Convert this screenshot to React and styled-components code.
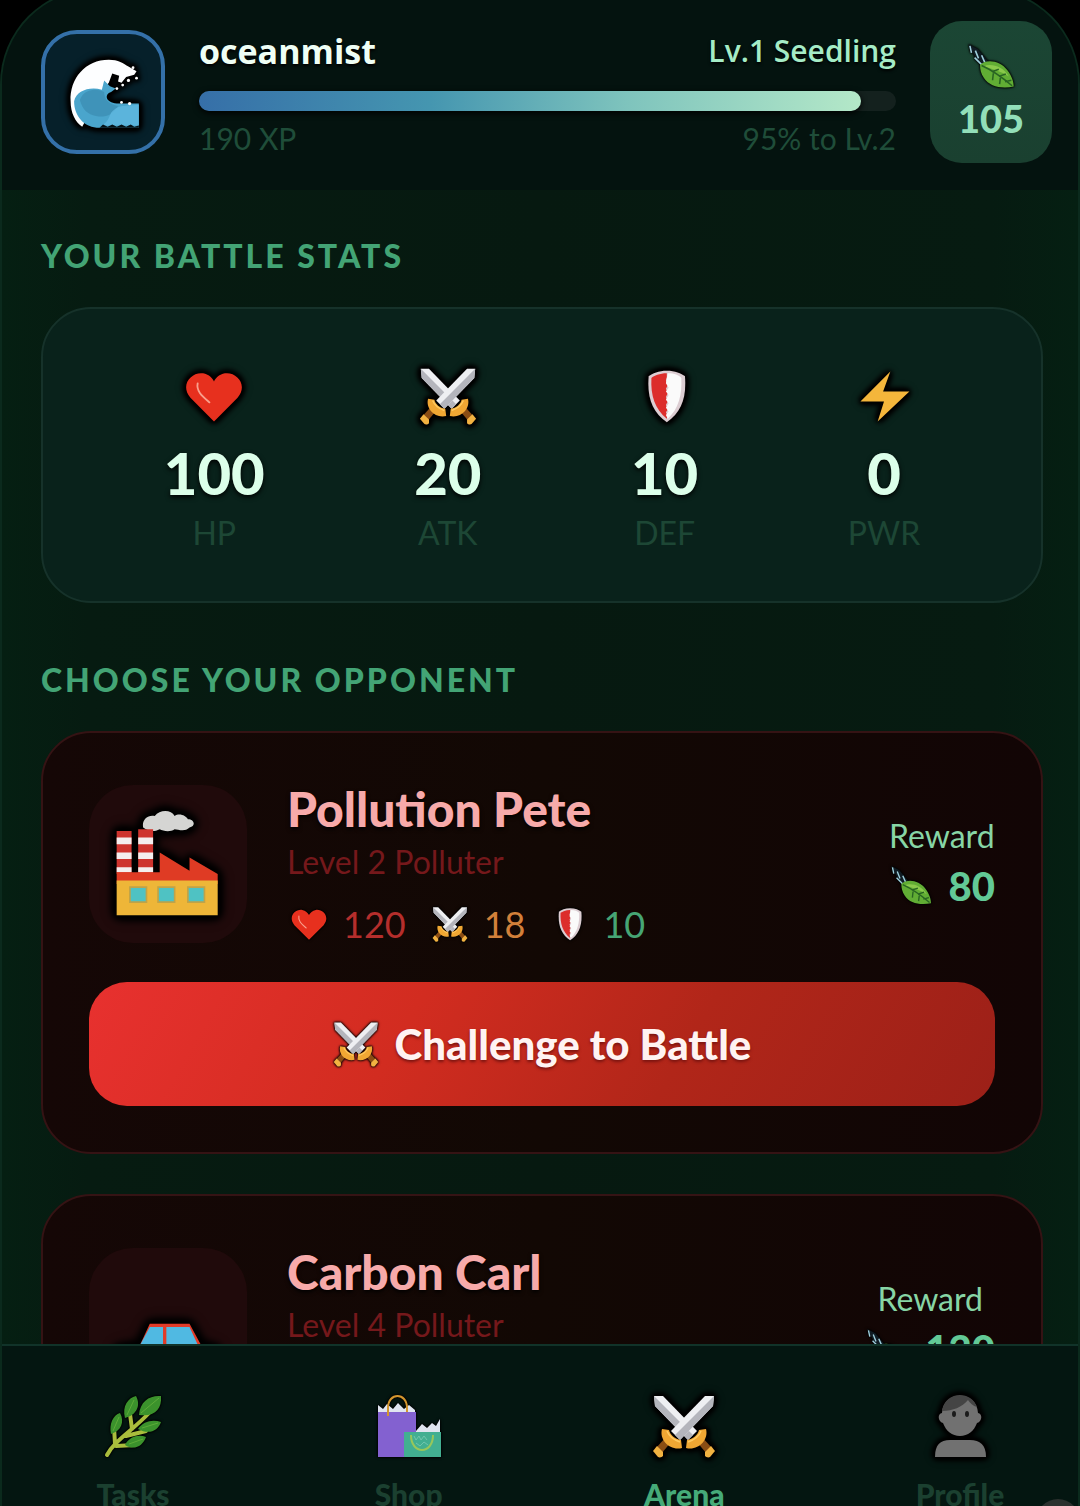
import { useId } from 'react';
import styled, { createGlobalStyle } from 'styled-components';

const GlobalStyle = createGlobalStyle`
	* {
		box-sizing: border-box;
	}

	body {
		margin: 0;
		overflow: hidden;
		background: #000;
		font-family: Lato, 'Open Sans', sans-serif;
	}

	button {
		font-family: inherit;
	}
`;

/* the frame runs a little past the top of the window */
const Shell = styled.div`
	display: flex;
	flex-direction: column;
	height: calc(100vh + 12px);
	margin-top: -12px;
	overflow: hidden;
	border: 2px solid #0b2a1d;
	border-bottom: 0;
	border-radius: 96px 96px 0 0;
	background: linear-gradient(90deg, #051f12 0%, #061b11 8%, #061910 50%, #061b11 92%, #051f12 100%);
`;

const Header = styled.header`
	display: flex;
	align-items: center;
	gap: 34px;
	flex: none;
	padding: 31px 26px 27px 39px;
	background: #04130f;
`;

const Avatar = styled.div`
	display: flex;
	align-items: center;
	justify-content: center;
	flex: none;
	width: 124px;
	height: 124px;
	border: 4px solid #3470a8;
	border-radius: 36px;
	background: #06202a;
`;

const Progress = styled.div`
	display: flex;
	flex-direction: column;
	flex: 1;
	min-width: 0;
`;

const ProgressRow = styled.div`
	display: flex;
	justify-content: space-between;
	align-items: center;
	line-height: 44px;
	font-family: 'Open Sans', sans-serif;
	text-shadow: 0 2px 3px #000;
`;

const UserName = styled.strong`
	font-size: 34px;
	font-weight: 700;
	color: #effff5;
`;

const LevelName = styled.span`
	font-size: 30px;
	font-weight: 600;
	color: #a5ecc6;
`;

const ProgressMeta = styled.div`
	display: flex;
	justify-content: space-between;
	font-size: 30px;
	line-height: 34px;
	color: #1f4d39;
`;

const Track = styled.div`
	height: 20px;
	margin: 18px 0 10px;
	border-radius: 10px;
	background: #14211e;
`;

const Fill = styled.div`
	height: 100%;
	border-radius: 10px;
	background: linear-gradient(90deg, #366fa8 0%, #4596b0 35%, #7fc4bd 65%, #b4e8c8 100%);
	box-shadow: 0 2px 6px #000;
`;

const LeafBadge = styled.div`
	display: flex;
	flex-direction: column;
	align-items: center;
	justify-content: center;
	gap: 6px;
	flex: none;
	width: 122px;
	height: 142px;
	padding-bottom: 4px;
	border-radius: 32px;
	background: linear-gradient(180deg, #1b4634, #1a4030);
	font-size: 38px;
	line-height: 40px;
	font-weight: 900;
	color: #92dfb9;
`;

const Content = styled.main`
	display: flex;
	flex-direction: column;
	flex: 1;
	min-height: 0;
	overflow: hidden;
	padding: 46px 35px 0 39px;
`;

const SectionTitle = styled.h2`
	margin: 0 0 31px;
	font-size: 32px;
	line-height: 40px;
	font-weight: 900;
	letter-spacing: 3px;
	text-transform: uppercase;
	color: #43a475;
`;

const StatsCard = styled.section`
	display: flex;
	justify-content: space-around;
	flex: none;
	margin-bottom: 57px;
	padding: 58px 46px 46px;
	border: 2px solid #16322a;
	border-radius: 50px;
	background: #09221b;
`;

const Stat = styled.div`
	display: flex;
	flex-direction: column;
	align-items: center;
`;

const StatValue = styled.span`
	margin-top: 14px;
	font-size: 58px;
	line-height: 68px;
	font-weight: 900;
	color: #dcffea;
	text-shadow: 0 2px 5px #000;
`;

const StatLabel = styled.span`
	margin-top: 4px;
	font-size: 32px;
	line-height: 44px;
	color: #1d4735;
`;

const OpponentCard = styled.article`
	flex: none;
	margin-bottom: 40px;
	padding: 46px;
	border: 2px solid #351314;
	border-radius: 50px;
	background: linear-gradient(90deg, #150706, #120804 50%, #120505);
`;

const OpponentTop = styled.div`
	display: flex;
	align-items: center;
	gap: 40px;
	min-height: 170px;
`;

const Portrait = styled.div`
	display: flex;
	align-items: center;
	justify-content: center;
	flex: none;
	width: 158px;
	height: 158px;
	border-radius: 44px;
	background: #200a0b;
`;

const OpponentInfo = styled.div`
	flex: 1;
	align-self: flex-start;
	min-width: 0;
`;

const OpponentName = styled.h3`
	margin: 0;
	font-size: 48px;
	line-height: 60px;
	font-weight: 900;
	color: #f7aaaa;
	text-shadow: 0 2px 4px #000;
`;

const OpponentLevel = styled.p`
	margin: 0;
	font-size: 32px;
	line-height: 46px;
	color: #75181b;
`;

const StatLine = styled.div`
	display: flex;
	gap: 26px;
	margin-top: 14px;
	padding-left: 4px;
`;

const SmallStat = styled.span`
	display: flex;
	align-items: center;
	gap: 16px;
	font-size: 36px;
	line-height: 50px;
	color: ${({ $color }) => $color};
`;

const Reward = styled.div`
	display: flex;
	flex-direction: column;
	align-items: center;
	font-size: 32px;
	line-height: 44px;
	color: #87d5a5;
`;

const RewardAmount = styled.span`
	display: flex;
	align-items: center;
	gap: 16px;
	font-size: 40px;
	line-height: 56px;
	font-weight: 900;
	color: #62c996;
`;

const BattleButton = styled.button`
	display: flex;
	align-items: center;
	justify-content: center;
	gap: 16px;
	width: 100%;
	height: 124px;
	margin-top: 33px;
	padding: 0;
	border: 0;
	border-radius: 38px;
	background: linear-gradient(120deg, #e8312f 0%, #d22c20 35%, #b12619 65%, #9c2018 100%);
	font-size: 42px;
	font-weight: 900;
	color: #fff3f2;
	text-shadow: 0 2px 3px #7a1410;
`;

const TabBar = styled.nav`
	display: flex;
	justify-content: space-between;
	flex: none;
	height: 162px;
	overflow: hidden;
	padding: 0 70px 0 83px;
	border-top: 2px solid #113329;
	background: #041611;
`;

const Tab = styled.a`
	display: flex;
	flex-direction: column;
	align-items: center;
	flex: none;
	gap: 16px;
	width: 96px;
	padding-top: 48px;
	font-size: 30px;
	line-height: 40px;
	font-weight: 900;
	text-decoration: none;
	color: ${({ $active }) => ($active ? '#46ab79' : '#1b4030')};
`;

const HelpDot = styled.span`
	position: fixed;
	right: 0;
	bottom: -37px;
	width: 44px;
	height: 44px;
	border-radius: 50%;
	background: #2b302e;
`;

const Emoji = styled.svg`
	display: block;
	flex: none;
	width: ${({ $size }) => $size}px;
	height: ${({ $size }) => $size}px;
	overflow: visible;
	filter: ${({ $glow }) => `drop-shadow(0 0 ${$glow}px #000) `.repeat($glow > 1 ? 4 : 2)};
`;

function Icon({ size, glow = 2, children }) {
	return (
		<Emoji viewBox="0 0 64 64" $size={size} $glow={glow} aria-hidden="true">
			{children}
		</Emoji>
	);
}

function Wave({ size }) {
	return (
		<Icon size={size}>
			<g transform="translate(1 2)">
				<path d="M3 38C2 18 16 2 36 2c8 0 13 3 17 6l7 4-2 3-7 2-4 5-3-1 1-5-6-2-3 8-5 6-4 6-14 26C7 56 3 48 3 38z" fill="#fdfeff" />
				<path d="M6 38c2-9 13-13 24-10l2-8 5 5 5 2-4 3c-6 2-5 9 5 10h19v21H28C15 61 6 51 6 38z" fill="#4aa5cc" />
				<path d="M11 37c3-9 13-11 21-7 0 7 5 11 12 12-4 7-10 10-18 9-8-1-13-6-15-14z" fill="#3a8cb0" opacity="0.7" />
				<path d="M38 48c3-4 7-6 11-6l13-1v18H30c4-2 6-6 8-11z" fill="#5fb8e0" opacity="0.8" />
				<path d="M28 61l3-3 4 2 4-2 4 2 4-2 4 2 4-2 3 2 4-1v2z" fill="#061216" />
				<g fill="#fff">
					<circle cx="57" cy="9" r="1.2" />
					<circle cx="53" cy="20" r="1.4" />
					<circle cx="48" cy="24" r="1.2" />
					<circle cx="60" cy="18" r="1.2" />
					<circle cx="43" cy="27" r="1.2" />
					<circle cx="47" cy="39" r="1.2" />
					<circle cx="54" cy="40" r="1.4" />
				</g>
			</g>
		</Icon>
	);
}

function Leaf({ size }) {
	return (
		<Icon size={size} glow={1}>
			<path d="M3 3l12 6 14 17-5 6-11-11z" fill="#101c24" />
			<path d="M5 5l2 9M12 11l4 10M20 17l4 9M11 20l9 9" stroke="#9fd0de" strokeWidth="2" fill="none" />
			<path d="M18 29c9-8 26-5 35 7 6 8 8 15 8 21-16 3-31 0-38-11-4-6-5-11-5-17z" fill="#61ad34" />
			<path d="M23 31c9-4 24 0 32 13-9-6-20-9-32-13z" fill="#8ac94b" />
			<path d="M20 30c11 5 25 14 39 26M33 38l9-3M42 44l9-3M35 40l-1 9M44 46l-1 8M50 51l8-2" stroke="#286422" strokeWidth="2" fill="none" />
		</Icon>
	);
}

function Heart({ size, glow }) {
	return (
		<Icon size={size} glow={glow}>
			<path d="M32 60L6 34C-6 20 7 5 20 7c6 1 10 5 12 9 2-4 6-8 12-9 13-2 26 13 14 27z" fill="#e7301e" />
			<path d="M14 18c-2 9 6 15 13 21" fill="none" stroke="#f9a08d" strokeWidth="2" strokeLinecap="round" />
		</Icon>
	);
}

function Swords({ size, glow }) {
	const id = useId();
	return (
		<Icon size={size} glow={glow}>
			<defs>
				<g id={id}>
					<path d="M44 47l5-5 11 12-5 6z" fill="#8a4d14" />
					<path d="M53 58l6-6 4 5-5 6c-2 1-4 0-5-1z" fill="#f2b241" />
					<path d="M2 2h9l34 35-9 9L3 12z" fill="#eeeff2" />
					<path d="M2 2l39 39-5 5L3 12z" fill="#b4b5bc" />
					<path d="M34 54l1-8c6-1 11-5 12-10l7-1c3 11-8 22-20 19z" fill="#f0a733" />
					<path d="M36 48c6-2 11-6 13-11" fill="none" stroke="#ffcb62" strokeWidth="1.5" />
				</g>
			</defs>
			<use href={`#${id}`} />
			<use href={`#${id}`} transform="matrix(-1 0 0 1 64 0)" />
		</Icon>
	);
}

function Shield({ size, glow }) {
	return (
		<Icon size={size} glow={glow}>
			<path d="M34 4c9 0 16 3 20 6 2 24-4 40-20 51C18 50 12 34 14 10c4-3 11-6 20-6z" fill="#dccdd2" />
			<path d="M34 7c-8 0-14 3-17 5-1 20 4 34 17 45l1-3-2-4 2-3-2-5 2-4-2-5 2-4-2-5 2-4-2-5 1-4z" fill="#dc2d2b" />
			<path d="M35 7c8 0 12 2 15 5 1 19-3 34-15 45l-2-4 3-4-3-4 3-5-3-4 3-5-3-4 3-4-3-5z" fill="#fafafa" />
		</Icon>
	);
}

function Bolt({ size }) {
	return (
		<Icon size={size}>
			<path d="M39 5L6 38h26l-7 22 35-33H31z" fill="#f4b63b" />
		</Icon>
	);
}

function Factory({ size }) {
	return (
		<Icon size={size} glow={3}>
			<g transform="translate(-2 -4)">
				<path d="M19 14c-1-5 3-8 7-7 3-4 10-4 12 0 3-2 7 0 8 2 4 0 5 4 1 5-3 3-7 1-9 1-3 2-7 1-9 0-4 2-7 1-10-1z" fill="#d5d5d3" />
				<path d="M3 16h9v26H3zM16 15h9v28h-9z" fill="#ce342e" />
				<path d="M3 20h9v4H3zM16 20h9v4h-9zM3 29h9v4H3zM16 29h9v4h-9zM3 38h9v3H3zM16 38h9v3h-9z" fill="#f4eeee" />
				<path d="M3 41h26V29l18 11v-8l17 10v6H3z" fill="#df3b24" />
				<path d="M3 46h61v21H3z" fill="#eeb638" />
				<path d="M11 50h10v9H11zM28 50h10v9H28zM46 50h10v9H46z" fill="#4fc2c3" stroke="#bfa348" />
			</g>
		</Icon>
	);
}

function Car({ size }) {
	return (
		<Icon size={size} glow={3}>
			<g transform="translate(4 0)">
				<path d="M-3 45l14-2 6-13h24l7 13 10 2v12H-3z" fill="#e23b28" />
				<path d="M17 32h8v13H10zM27 32h14l6 13H27z" fill="#50b9e2" />
				<circle cx="11" cy="57" r="6" fill="#333" />
				<circle cx="45" cy="57" r="6" fill="#333" />
			</g>
		</Icon>
	);
}

function Herb({ size }) {
	return (
		<Icon size={size} glow={1}>
			<g transform="translate(2 0)">
				<path d="M4 61C11 47 29 37 46 19M12 50l-1-17M29 35l-2-15M23 42l20-5M13 52l19-1" fill="none" stroke="#a9bd3c" strokeWidth="4" strokeLinecap="round" />
				<path d="M36 21C37 7 47 1 58 2c1 13-6 21-22 19zM22 24C19 12 25 4 33 2c5 9 1 19-11 22zM8 40c-2-10 2-19 9-21 5 9 1 18-9 21zM35 35c5-8 15-10 23-7-3 9-12 13-23 7zM22 51c4-8 13-11 21-8-3 9-12 14-21 8z" fill="#3b922c" />
				<path d="M38 19L56 4M24 21l7-15M10 37l6-14M39 34l16-5M26 50l14-5" stroke="#5dab38" fill="none" />
			</g>
		</Icon>
	);
}

function Bags({ size }) {
	return (
		<Icon size={size} glow={1}>
			<path d="M1 11l5 4 4-5 6 5 5-6 6 6 5-4 6 5v9H1zM39 37l6-7 5 4 5-5 4 3 4-7v18H39z" fill="#e0e5f0" />
			<path d="M1 18h38v45H1z" fill="#8361d0" />
			<path d="M27 38h37v25H27z" fill="#42af91" />
			<path d="M11 22V14c0-16 19-16 19 0v4" fill="none" stroke="#d4962e" strokeWidth="2" />
			<path d="M34 41c0 20 22 20 22 0" fill="none" stroke="#98c75a" strokeWidth="2" />
			<path d="M37 42l2 4 3-4 2 4 3-4 3 4M39 49l4 3 4-4 4 3" fill="none" stroke="#70c6ad" strokeWidth="1" />
		</Icon>
	);
}

function Person({ size }) {
	return (
		<Icon size={size} glow={2}>
			<path d="M14 19C15-4 49-4 50 19c5 1 4 9-1 10-3 8-9 13-17 13s-14-5-17-13c-5-1-6-9-1-10z" fill="#717171" />
			<path d="M14 17C17-3 43-4 49 13c-4-1-7-4-9-7-6 7-15 11-26 11z" fill="#444" />
			<ellipse cx="26" cy="20" rx="2" ry="3" fill="#1b1b1b" />
			<ellipse cx="39" cy="20" rx="2" ry="3" fill="#1b1b1b" />
			<path d="M7 63c0-12 5-17 15-17h20c10 0 16 5 16 17z" fill="#717171" />
		</Icon>
	);
}

const stats = [
	{ label: 'HP', value: 100, icon: Heart },
	{ label: 'ATK', value: 20, icon: Swords },
	{ label: 'DEF', value: 10, icon: Shield },
	{ label: 'PWR', value: 0, icon: Bolt },
];

const opponents = [
	{
		name: 'Pollution Pete',
		level: 2,
		reward: 80,
		icon: Factory,
		fight: { hp: 120, atk: 18, def: 10 },
	},
	{ name: 'Carbon Carl', level: 4, reward: 120, icon: Car },
];

const tabs = [
	{ label: 'Tasks', icon: Herb },
	{ label: 'Shop', icon: Bags },
	{ label: 'Arena', icon: Swords, active: true },
	{ label: 'Profile', icon: Person },
];

function Opponent({ name, level, reward, icon: Picture, fight }) {
	return (
		<OpponentCard>
			<OpponentTop>
				<Portrait>
					<Picture size={106} />
				</Portrait>
				<OpponentInfo>
					<OpponentName>{name}</OpponentName>
					<OpponentLevel>Level {level} Polluter</OpponentLevel>
					{fight && (
						<StatLine>
							<SmallStat $color="#b52e2c">
								<Heart size={36} glow={1} />
								{fight.hp}
							</SmallStat>
							<SmallStat $color="#d2803a">
								<Swords size={36} glow={1} />
								{fight.atk}
							</SmallStat>
							<SmallStat $color="#46a575">
								<Shield size={36} glow={1} />
								{fight.def}
							</SmallStat>
						</StatLine>
					)}
				</OpponentInfo>
				<Reward>
					Reward
					<RewardAmount>
						<Leaf size={44} />
						{reward}
					</RewardAmount>
				</Reward>
			</OpponentTop>
			{fight && (
				<BattleButton type="button">
					<Swords size={46} glow={1} />
					Challenge to Battle
				</BattleButton>
			)}
		</OpponentCard>
	);
}

function App() {
	const progress = 95;

	return (
		<>
			<GlobalStyle />
			<Shell>
				<Header>
					<Avatar>
						<Wave size={74} />
					</Avatar>
					<Progress>
						<ProgressRow>
							<UserName>oceanmist</UserName>
							<LevelName>Lv.1 Seedling</LevelName>
						</ProgressRow>
						<Track>
							<Fill style={{ width: `${progress}%` }} />
						</Track>
						<ProgressMeta>
							<span>190 XP</span>
							<span>{progress}% to Lv.2</span>
						</ProgressMeta>
					</Progress>
					<LeafBadge>
						<Leaf size={50} />
						105
					</LeafBadge>
				</Header>
				<Content>
					<SectionTitle>Your Battle Stats</SectionTitle>
					<StatsCard>
						{stats.map(({ label, value, icon: StatIcon }) => (
							<Stat key={label}>
								<StatIcon size={58} />
								<StatValue>{value}</StatValue>
								<StatLabel>{label}</StatLabel>
							</Stat>
						))}
					</StatsCard>
					<SectionTitle>Choose Your Opponent</SectionTitle>
					{opponents.map((opponent) => (
						<Opponent key={opponent.name} {...opponent} />
					))}
				</Content>
				<TabBar>
					{tabs.map(({ label, icon: TabIcon, active }) => (
						<Tab key={label} href={`#${label.toLowerCase()}`} $active={active}>
							<TabIcon size={64} />
							{label}
						</Tab>
					))}
				</TabBar>
			</Shell>
			<HelpDot />
		</>
	);
}

export default App;
